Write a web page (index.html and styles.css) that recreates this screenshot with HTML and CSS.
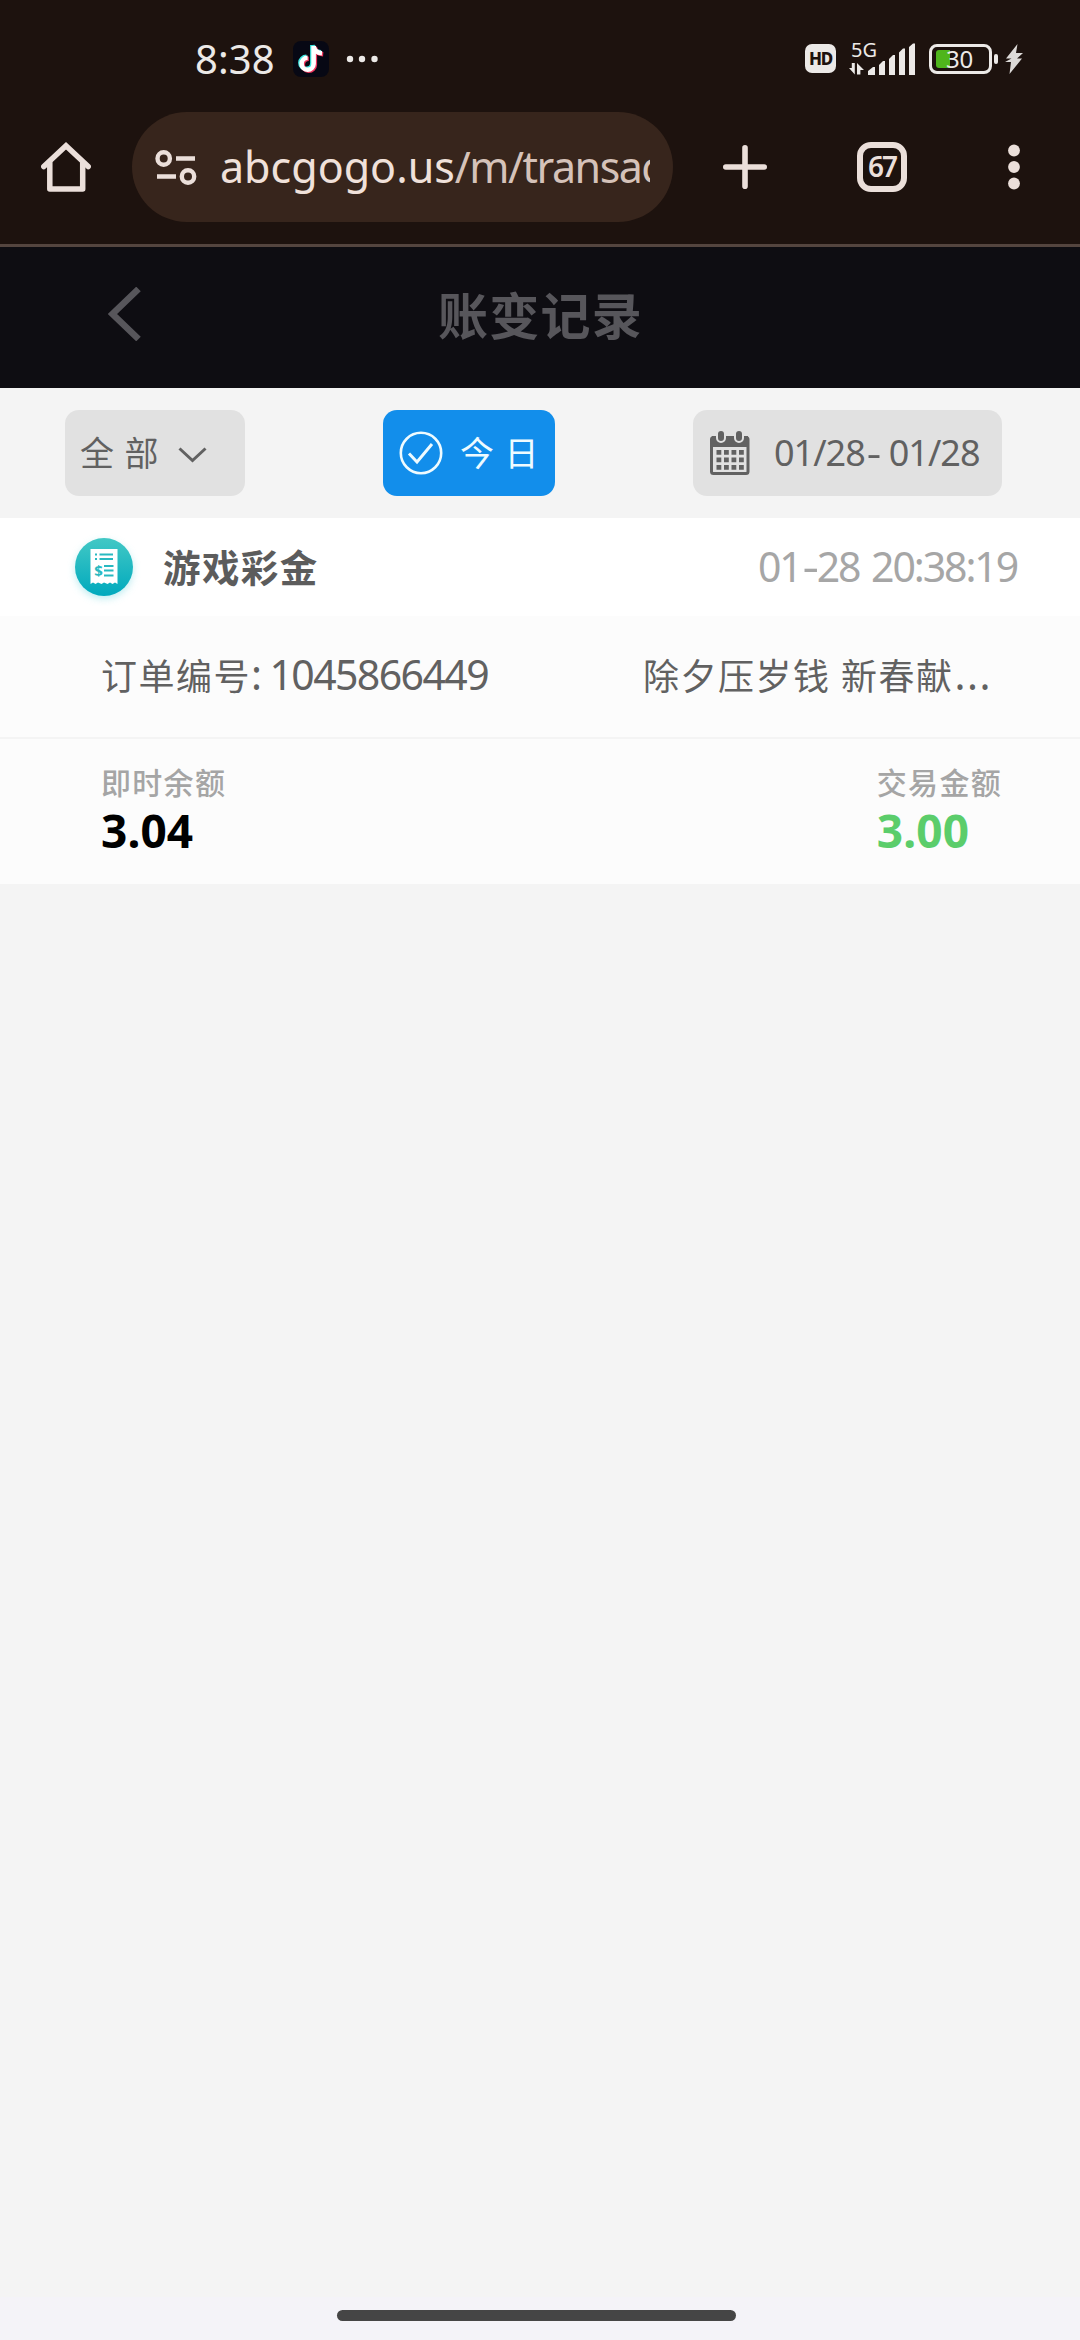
FILE: index.html
```html
<!DOCTYPE html>
<html lang="zh-CN">
<head>
<meta charset="utf-8">
<title>账变记录</title>
<link rel="stylesheet" href="styles.css">
</head>
<body>
<div class="screen">
  <div class="statusbar">
    <span class="clock">8:38</span>
    <svg class="app-icon" width="36" height="36" viewBox="0 0 36 36">
      <rect width="36" height="36" rx="8" fill="#070814"/>
      <g fill="none" stroke-width="4.6">
        <path transform="translate(-1.2 -1)" stroke="#3ce6e0" d="M20.6 5V23a6 6 0 1 1-6-6.2M20.6 5c.6 4.600 4 6.900 8.400 7.200"/>
        <path transform="translate(1.200 1)" stroke="#f0355d" d="M20.600 5V23a6 6 0 1 1-6-6.200M20.600 5c.600 4.600 4 6.900 8.400 7.200"/>
        <path stroke="#fff" d="M20.600 5V23a6 6 0 1 1-6-6.200M20.600 5c.600 4.600 4 6.900 8.400 7.200"/>
      </g>
    </svg>
    <svg class="more-dots" width="32" height="8" viewBox="0 0 32 8" fill="#ece9e7"><circle cx="4" cy="4" r="3.200"/><circle cx="16" cy="4" r="3.200"/><circle cx="28.500" cy="4" r="3.200"/></svg>
    <span class="hd">HD</span>
    <div class="network">
      <span class="gen">5G</span>
      <svg width="68" height="32" viewBox="0 0 68 32" fill="#ece9e7">
        <path d="M0 25h2.800V20h3v11.500zM8 31.500V20l7 7h-3.600v4.500z"/>
        <path d="M19 32v-4l5-4h2v8zM30 32V22l4-4h2v14zM40 32V16l4-4h2v20zM50 32V9.500l4-4h2V32zM60 32V4l4-3.500h2V32z"/>
      </svg>
    </div>
    <div class="battery"><span class="charge"></span><span class="level">30</span></div>
    <span class="nub"></span>
    <svg class="bolt" width="18" height="30" viewBox="0 0 18 30" fill="#dddad8"><path d="M12.500 0 1 14.500h5.500L0 18h6L4.500 30 17 14.500h-5L18 9h-7z"/></svg>
  </div>

  <div class="toolbar">
    <svg class="home" width="50" height="50" viewBox="0 0 50 50" fill="none" stroke="#ebdfda" stroke-width="5.500" stroke-linecap="round" stroke-linejoin="miter"><path d="M2.800 24.500 25 3.800 47.200 24.500"/><path stroke-linejoin="round" d="M8.800 21V47H41.700V21"/></svg>
    <div class="omnibox">
      <svg width="42" height="35" viewBox="0 0 42 35" fill="none" stroke="#ebdfda" stroke-width="4.400"><circle cx="8.700" cy="8.500" r="6.200"/><path d="M21 8.500h19M2 26.500h19"/><circle cx="33" cy="26.500" r="6.200"/></svg>
      <div class="url">abcgogo.us<span class="path">/m/transac</span></div>
    </div>
    <svg class="plus" width="44" height="44" viewBox="0 0 44 44" stroke="#ebdfda" stroke-width="5.600" stroke-linecap="round"><path d="M22 2.800V41.200M2.800 22H41.200"/></svg>
    <div class="tabs">67</div>
    <svg class="menu" width="12" height="46" viewBox="0 0 12 46" fill="#ebdfda"><circle cx="6" cy="6.500" r="5.900"/><circle cx="6" cy="23" r="5.900"/><circle cx="6" cy="39.500" r="5.900"/></svg>
  </div>

  <header class="page-header">
    <svg class="back" width="34" height="54" viewBox="0 0 34 54" fill="none" stroke="#57565b" stroke-width="6.500"><path d="M30.500 2 4.500 27 30.500 52"/></svg>
    <h1>账变记录</h1>
  </header>

  <div class="filters">
    <div class="pill kind"><span class="cjk">全部</span>
      <svg width="29" height="16" viewBox="0 0 29 16" fill="none" stroke="#616161" stroke-width="3"><path d="M1.500 1.500 14.500 13.500 27.500 1.500"/></svg>
    </div>
    <div class="pill today">
      <svg width="44" height="44" viewBox="0 0 44 44" fill="none" stroke="#eefbff" stroke-width="2.600"><circle cx="22" cy="22" r="20.200"/><path stroke-width="3" d="M10 22.500 18 31 33 13"/></svg>
      <span class="cjk">今日</span>
    </div>
    <div class="pill range">
      <svg width="40" height="44" viewBox="0 0 40 44">
        <rect x="1.500" y="6.500" width="36.500" height="36" rx="2" fill="none" stroke="#616161" stroke-width="3"/>
        <path fill="#616161" d="M2 5h36v11H2z"/>
        <g fill="#616161" stroke="#e1e1e1" stroke-width="2"><rect x="7" y="-1" width="8" height="12" rx="4"/><rect x="25" y="-1" width="8" height="12" rx="4"/></g>
        <path stroke="#616161" stroke-width="4.800" stroke-dasharray="4.800 2.700" d="M6.500 21.300h28M6.500 28.800h28M6.500 36.300h28"/>
      </svg>
      <span class="dates">01/28<span class="dash">-</span> 01/28</span>
    </div>
  </div>

  <main class="record">
    <div class="record-head">
      <svg class="badge" width="78" height="78" viewBox="0 0 78 78">
        <defs>
          <linearGradient id="teal" x1="0" y1="0" x2="0" y2="1"><stop offset="0" stop-color="#42c8c5"/><stop offset="1" stop-color="#00a9bd"/></linearGradient>
          <filter id="glow" x="-30%" y="-30%" width="160%" height="160%"><feGaussianBlur stdDeviation="4"/></filter>
        </defs>
        <circle cx="39" cy="42" r="28" fill="#8edfe6" opacity=".7" filter="url(#glow)"/>
        <circle cx="39" cy="39" r="29" fill="url(#teal)"/>
        <path fill="#fff" d="M25.500 21H52.500V56L50 54.500 47.500 56 45 54.500 42.500 56 39 54.500 36.500 56 33 54.500 30.500 56 28 54.500 25.500 56z"/>
        <g stroke="#28b9c1" stroke-width="1.800" fill="none"><path d="M30 26.500h2M34.500 26.500h13.500M30 31h2M34.500 31h13.500M39 38h9.500M39 42.500h9.500M39 47.500h9.500"/></g>
        <text x="33.500" y="48" text-anchor="middle" class="dollar">$</text>
      </svg>
      <span class="record-title">游戏彩金</span>
      <time>01<span class="dash">-</span>28<span class="sep"> </span>20:38:19</time>
    </div>
    <div class="order">
      <div class="order-no"><span>订单编号</span><span class="num">: 1045866449</span></div>
      <div class="order-note">除夕压岁钱<span class="gap"> </span>新春献<span class="num dots">...</span></div>
    </div>
    <div class="amounts">
      <div class="amount"><span class="label">即时余额</span><span class="value">3.04</span></div>
      <div class="amount"><span class="label">交易金额</span><span class="value gain">3.00</span></div>
    </div>
  </main>

  <div class="navbar"><span class="handle"></span></div>
</div>
</body>
</html>
```

FILE: styles.css
```css
* { box-sizing: border-box; }
body { margin: 0; font-family: "Noto Sans", "Noto Sans CJK SC", sans-serif; }
svg { display: block; flex: none; }
.screen { width: 1080px; height: 2340px; display: flex; flex-direction: column; background: #f4f4f4; }
.screen span, .url, time, .tabs { white-space: pre; }

.statusbar { height: 102px; background: #1d120e; display: flex; align-items: flex-start; padding-left: 195px; color: #ece9e7; }
.clock { width: 98px; margin-top: 34px; font-size: 40px; line-height: 50px; letter-spacing: .1px; }
.app-icon { margin-top: 41px; }
.more-dots { margin: 55px 0 0 17px; }
.hd { width: 31px; height: 29px; margin: 44px 0 0 427px; border-radius: 7px; background: #ece9e7; color: #1d120e; font: 800 17px/29px "Noto Sans", sans-serif; text-align: center; letter-spacing: -1.200px; }
.network { width: 68px; margin: 42px 0 0 13px; display: grid; }
.network > * { grid-area: 1 / 1; }
.network svg { margin-top: 1px; }
.gen { margin-left: 2px; font-size: 20px; line-height: 16px; }
.battery { width: 63px; height: 30px; margin: 44px 0 0 12px; border: 3px solid #ece9e7; border-radius: 8px; display: grid; align-items: center; }
.battery > * { grid-area: 1 / 1; }
.charge { width: 14px; height: 18px; margin-left: 4px; border-radius: 3px 0 0 3px; background: #4fb51c; }
.level { margin-left: 14px; font-size: 24px; line-height: 24px; letter-spacing: -.3px; }
.nub { width: 4px; height: 10px; margin: 54px 0 0 2px; border-radius: 2px; background: #ece9e7; }
.bolt { margin: 44px 0 0 7px; }

.toolbar { height: 145px; padding: 10px 0 0 41px; background: #1d120e; border-bottom: 3px solid #54453f; display: flex; align-items: flex-start; color: #ebdfda; }
.home { margin-top: 30px; }
.omnibox { width: 541px; height: 110px; margin-left: 41px; padding: 0 22px 0 23px; border-radius: 55px; background: #37251c; display: flex; align-items: center; }
.url { width: 430px; margin-left: 23px; overflow: hidden; font-size: 43px; line-height: 60px; color: #f0e1da; }
.path { color: #d5c2b9; letter-spacing: -1.500px; }
.plus { margin: 33px 0 0 50px; }
.tabs { width: 50px; height: 50px; margin: 30px 0 0 90px; border: 6px solid #ebdfda; border-radius: 14px; font-size: 28px; font-weight: 600; line-height: 37px; text-align: center; letter-spacing: -2px; }
.menu { margin: 32px 0 0 101px; }

.page-header { height: 141px; padding-bottom: 7px; background: #0e0d12; display: grid; grid-template-columns: 108px 1fr 108px; align-items: center; }
.back { margin-left: 108px; }
h1 { margin: -2px 0 0 1px; font: 700 50px/60px "Noto Sans CJK SC", sans-serif; letter-spacing: 1.300px; text-align: center; color: #57565b; }

.filters { height: 130px; padding: 0 78px 0 65px; display: flex; align-items: center; justify-content: space-between; }
.pill { height: 86px; border-radius: 14px; background: #e1e1e1; color: #616161; display: flex; align-items: center; }
.cjk { margin-top: -2px; font: 400 34px/50px "Noto Sans CJK SC", sans-serif; letter-spacing: 10.500px; }
.kind { width: 180px; padding-left: 15px; }
.kind svg { margin-left: 9px; margin-top: 4px; }
.today { width: 172px; padding-left: 16px; background: #128eeb; color: #eefbff; }
.today .cjk { margin-left: 17px; }
.range { width: 309px; padding-left: 17px; }
.dates { margin-left: 24px; font-size: 36px; line-height: 50px; letter-spacing: -1px; }
.dash { display: inline-block; transform: scaleX(1.250); margin: 0 2px 0 3px; }

.record-head { height: 98px; padding: 0 63px 0 65px; background: #fff; display: flex; align-items: center; }
.dollar { font: 700 15px "Noto Sans", sans-serif; fill: #28b9c1; }
.record-title { margin: -2px 0 0 20px; font: 700 37.500px/50px "Noto Sans CJK SC", sans-serif; letter-spacing: 1.400px; color: #5c5c5c; }
time { margin: -2px 0 0 auto; font-size: 41px; line-height: 50px; letter-spacing: -2.100px; color: #a6a6a6; }
.sep { letter-spacing: 1px; }
.order { height: 123px; padding: 0 0 6px 101px; background: #fcfcfc; border-bottom: 2px solid #f4f4f4; display: grid; grid-template-columns: 542px 1fr; align-items: center; font: 400 36px/50px "Noto Sans CJK SC", sans-serif; letter-spacing: 1.500px; color: #616161; }
.num { font-family: "Noto Sans", sans-serif; font-size: 41px; letter-spacing: -1.600px; }
.dots { margin-left: 1px; letter-spacing: 1.400px; }
.gap { letter-spacing: 2.500px; }
.amounts { height: 145px; padding: 22px 78px 0 101px; background: #fcfcfc; display: flex; justify-content: space-between; }
.amount { display: flex; flex-direction: column; }
.label { font: 500 30px/40px "Noto Sans CJK SC", sans-serif; letter-spacing: 1.300px; color: #a5a5a5; }
.value { font-size: 46px; font-weight: 700; line-height: 59px; letter-spacing: .1px; color: #000; }
.gain { color: #5bcd6b; }

.navbar { height: 43px; margin-top: auto; padding: 13px 0 0 337px; background: #f4f3f8; }
.handle { display: block; width: 399px; height: 11px; border-radius: 6px; background: #454545; }
```
